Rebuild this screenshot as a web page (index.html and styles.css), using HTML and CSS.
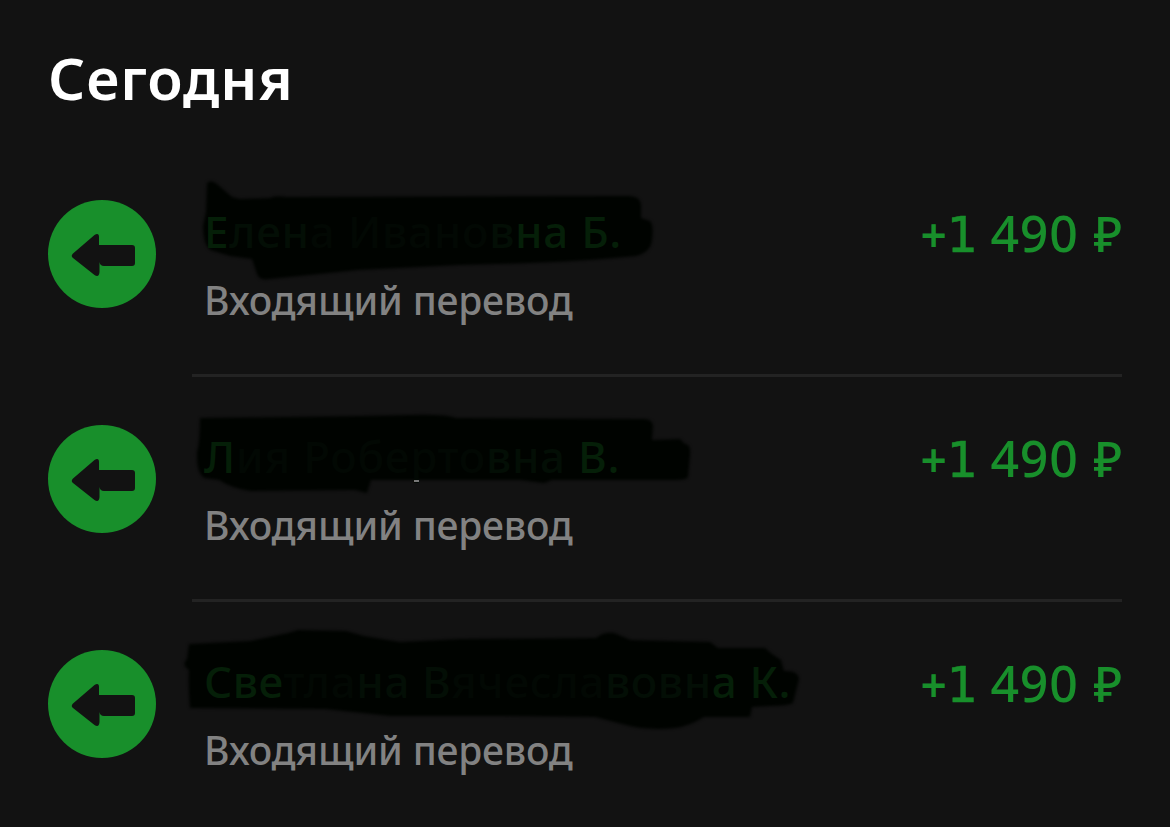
FILE: index.html
```html
<!DOCTYPE html>
<html lang="ru">
<head>
  <meta charset="UTF-8">
  <title>Сегодня</title>
  <link rel="stylesheet" href="styles.css">
</head>
<body>
  <h1 class="title">Сегодня</h1>
  <div class="list">
    <div class="item">
      <svg class="icon" viewBox="0 0 108 108">
        <circle cx="54" cy="54" r="54"/>
        <path d="M25 53.500 46.500 35Q51 32.500 51 37V45H84Q87 45 87 48V63Q87 66 84 66H56Q52 66 51.500 62V72Q51 78 46.500 75L25 58Q22.500 56 25 53.500Z"/>
      </svg>
      <div class="content">
        <div class="info">
          <div class="name name-1">
            <svg class="marker" viewBox="0 0 630 110">
              <path d="M27 11Q31 7 37 12L52 25 60 27 90 26Q95 23 106 25L450 24Q461 25 461 33V46L470 49Q474 53 472 68 471 80 456 84 390 91 280 93L178 98 90 107Q79 109 77 102L72 87 50 84 30 78Q23 72 23 54L26 40Z"/>
            </svg>
            <span class="text"><span class="t3">Е</span><span class="t2">лен</span><span class="t1">а Ивано</span><span class="t2">в</span><span class="t3">на Б.</span></span>
          </div>
          <div class="type">Входящий перевод</div>
        </div>
        <div class="amount"><span class="plus">+</span><span class="one">1</span> 490 <span class="rub">₽</span></div>
      </div>
    </div>
    <div class="item">
      <svg class="icon" viewBox="0 0 108 108">
        <circle cx="54" cy="54" r="54"/>
        <path d="M25 53.500 46.500 35Q51 32.500 51 37V45H84Q87 45 87 48V63Q87 66 84 66H56Q52 66 51.500 62V72Q51 78 46.500 75L25 58Q22.500 56 25 53.500Z"/>
      </svg>
      <div class="content">
        <div class="info">
          <div class="name name-2">
            <svg class="marker" viewBox="0 0 630 110">
              <path d="M20 21 180 19 230 18Q265 17 276 21L465 22Q473 23 473 29L472 43 500 42 505 47Q511 47 510 58L508 80Q507 83 495 83H372L364 86 340 83 191 83 187 96 175 93 70 94Q51 91 39 83L24 81Q16 75 17 55 20 45 20 21Z"/>
            </svg>
            <span class="text"><span class="t3">Л</span><span class="t1">ия Роберто</span><span class="t2">вна</span><span class="t3"> В.</span></span>
            <span class="speck"></span>
          </div>
          <div class="type">Входящий перевод</div>
        </div>
        <div class="amount"><span class="plus">+</span><span class="one">1</span> 490 <span class="rub">₽</span></div>
      </div>
    </div>
    <div class="item">
      <svg class="icon" viewBox="0 0 108 108">
        <circle cx="54" cy="54" r="54"/>
        <path d="M25 53.500 46.500 35Q51 32.500 51 37V45H84Q87 45 87 48V63Q87 66 84 66H56Q52 66 51.500 62V72Q51 78 46.500 75L25 58Q22.500 56 25 53.500Z"/>
      </svg>
      <div class="content">
        <div class="info">
          <div class="name name-3">
            <svg class="marker" viewBox="0 0 630 110">
              <path d="M9 22 70 19 108 11 118 8 166 9 184 14 220 20 280 17 416 16Q423 10 434 11L451 18 530 20 538 26 585 26 592 32 601 38 604 49Q618 48 619 57L613 81Q608 84 590 84L572 85 570 95 524 95Q510 104 495 106 465 109 442 102L415 95 320 94 210 94 145 87 10 86Q8 60 9 48 1 43 7 37Z"/>
            </svg>
            <span class="text"><span class="t3">Све</span><span class="t1">тла</span><span class="t2">на В</span><span class="t1">ячесла</span><span class="t2">вовн</span><span class="t3">а К.</span></span>
          </div>
          <div class="type">Входящий перевод</div>
        </div>
        <div class="amount"><span class="plus">+</span><span class="one">1</span> 490 <span class="rub">₽</span></div>
      </div>
    </div>
  </div>
</body>
</html>
```

FILE: styles.css
```css
* { box-sizing: border-box; }
body {
  margin: 0;
  background: #121212;
  font-family: "Noto Sans", sans-serif;
  overflow: hidden;
}
.title {
  height: 152px;
  margin: 0;
  padding: 38px 48px 0;
  color: #fff;
  font-size: 58px;
  font-weight: 600;
  line-height: 80px;
  letter-spacing: 0.9px;
}
.list { padding: 0 48px; }
.item { display: flex; height: 225px; }
.icon {
  width: 108px;
  height: 108px;
  margin: 48px 36px 0 0;
  fill: #188f2b;
}
.icon path { fill: #121212; }
.content {
  display: flex;
  flex: 1;
  justify-content: space-between;
  padding-left: 12px;
  border-bottom: 3px solid #232323;
}
.item:last-child .content { border-bottom: 0; }
.info { padding-top: 49px; }
.name {
  position: relative;
  height: 60px;
  font-size: 44px;
  font-weight: 500;
  line-height: 60px;
  letter-spacing: 0.7px;
  white-space: nowrap;
}
.name-3 { letter-spacing: 0.6px; }
/* закраска поверх имени */
.marker {
  position: absolute;
  left: -24px;
  top: -29px;
  width: 630px;
  height: 110px;
  fill: #000300;
  filter: blur(1.5px);
}
.speck {
  position: absolute;
  left: 210px;
  top: 54px;
  width: 5px;
  height: 2px;
  background: #777;
}
.text { position: relative; }
.t1 { color: #020803; }
.t2 { color: #030e05; }
.t3 { color: #051f08; }
.type {
  margin-top: 14px;
  color: #828282;
  font-size: 39px;
  font-weight: 500;
  line-height: 50px;
  letter-spacing: -0.2px;
  white-space: nowrap;
}
.amount {
  padding-top: 51px;
  color: #188f2b;
  font-size: 50px;
  font-weight: 500;
  line-height: 60px;
  letter-spacing: 0.8px;
  margin-right: -1px;
  white-space: nowrap;
}
.plus {
  font-size: 46px;
  font-weight: 600;
  margin-right: -1px;
}
.one {
  font-family: "DejaVu Sans", sans-serif;
  font-size: 49px;
  -webkit-text-stroke: 0.5px #188f2b;
  margin-right: -2px;
}
.rub { font-size: 49px; margin-left: 1px; }
```
